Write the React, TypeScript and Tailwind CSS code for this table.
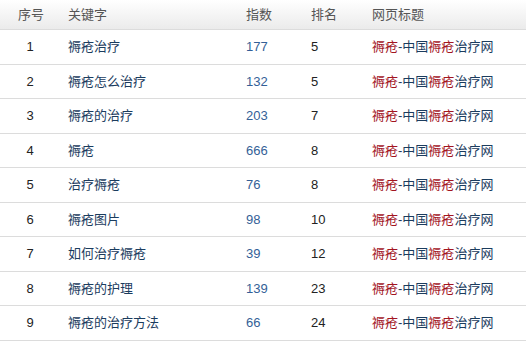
import React from "react";

const rows = [
  { n: 1, kw: "褥疮治疗", idx: 177, rank: 5 },
  { n: 2, kw: "褥疮怎么治疗", idx: 132, rank: 5 },
  { n: 3, kw: "褥疮的治疗", idx: 203, rank: 7 },
  { n: 4, kw: "褥疮", idx: 666, rank: 8 },
  { n: 5, kw: "治疗褥疮", idx: 76, rank: 8 },
  { n: 6, kw: "褥疮图片", idx: 98, rank: 10 },
  { n: 7, kw: "如何治疗褥疮", idx: 39, rank: 12 },
  { n: 8, kw: "褥疮的护理", idx: 139, rank: 23 },
  { n: 9, kw: "褥疮的治疗方法", idx: 66, rank: 24 },
];

const font = { fontFamily: '"Liberation Sans", "Noto Sans CJK SC", sans-serif' };

export default function App() {
  return (
    <div className="w-[526px] h-[343px] bg-white overflow-hidden text-[13px]" style={font}>
      <div className="grid grid-cols-[60px_178px_65px_61px_1fr] h-[30px] items-center border-b border-[#dcdcdc] bg-gradient-to-b from-white to-[#ebebeb] text-[#555]">
        <div className="text-center pl-[2px]">序号</div>
        <div className="pl-2">关键字</div>
        <div className="pl-2">指数</div>
        <div className="pl-2">排名</div>
        <div className="pl-2">网页标题</div>
      </div>
      {rows.map((r) => (
        <div
          key={r.n}
          className="grid grid-cols-[60px_178px_65px_61px_1fr] h-[34.5px] items-center border-b border-[#dcdcdc]"
        >
          <div className="text-center text-[#222]">{r.n}</div>
          <div className="pl-2 text-[#1b3c5e]">{r.kw}</div>
          <div className="pl-2 text-[#345f97]">{r.idx}</div>
          <div className="pl-2 text-[#222]">{r.rank}</div>
          <div className="pl-2 whitespace-nowrap text-[#1b3c5e]">
            <span className="text-[#a3151f]">褥疮</span>-中国<span className="text-[#a3151f]">褥疮</span>治疗网
          </div>
        </div>
      ))}
    </div>
  );
}
